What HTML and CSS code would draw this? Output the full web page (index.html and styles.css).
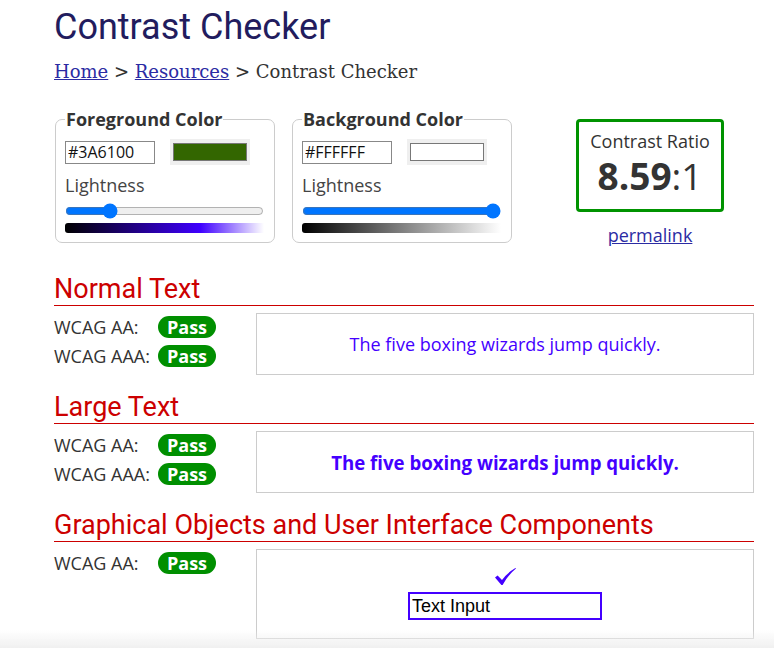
FILE: index.html
```html
<!DOCTYPE html>
<html lang="en">
<head>
    <meta charset="UTF-8">
    <meta name="viewport" content="width=device-width, initial-scale=1.0">
    <title>Contrast Checker</title>
    <link rel="stylesheet" href="styles.css">
</head>
<body>

<div class="page">
    <h1 class="title">Contrast Checker</h1>
    <div class="crumbs">
        <a href="#">Home</a> &gt; <a href="#">Resources</a> &gt; Contrast Checker
    </div>

    <div class="controls">
        <fieldset class="picker">
            <legend>Foreground Color</legend>
            <div class="picker-row">
                <input class="hex" type="text" value="#3A6100">
                <input class="swatch" type="color" value="#336600">
            </div>
            <label class="light-label">Lightness</label>
            <input class="slider" type="range" min="0" max="100" value="20">
            <div class="bar bar-fg"></div>
        </fieldset>

        <fieldset class="picker">
            <legend>Background Color</legend>
            <div class="picker-row">
                <input class="hex" type="text" value="#FFFFFF">
                <input class="swatch" type="color" value="#ffffff">
            </div>
            <label class="light-label">Lightness</label>
            <input class="slider" type="range" min="0" max="100" value="100">
            <div class="bar bar-bg"></div>
        </fieldset>

        <div class="ratio-wrap">
            <div class="ratio">
                <div class="ratio-label">Contrast Ratio</div>
                <div class="ratio-value"><b>8.59</b>:1</div>
            </div>
            <a class="permalink" href="#">permalink</a>
        </div>
    </div>

    <h2 class="section-title">Normal Text</h2>
    <div class="result">
        <div class="grades">
            <div class="grade"><span class="grade-name">WCAG AA:</span><span class="pass">Pass</span></div>
            <div class="grade"><span class="grade-name">WCAG AAA:</span><span class="pass">Pass</span></div>
        </div>
        <div class="sample">The five boxing wizards jump quickly.</div>
    </div>

    <h2 class="section-title">Large Text</h2>
    <div class="result">
        <div class="grades">
            <div class="grade"><span class="grade-name">WCAG AA:</span><span class="pass">Pass</span></div>
            <div class="grade"><span class="grade-name">WCAG AAA:</span><span class="pass">Pass</span></div>
        </div>
        <div class="sample sample-large">The five boxing wizards jump quickly.</div>
    </div>

    <h2 class="section-title">Graphical Objects and User Interface Components</h2>
    <div class="result">
        <div class="grades">
            <div class="grade"><span class="grade-name">WCAG AA:</span><span class="pass">Pass</span></div>
        </div>
        <div class="sample sample-ui">
            <svg class="check" width="21" height="17" viewBox="0 0 21 17">
                <path d="M0 9.5 L2.6 7.6 L7 12 Q12 5 20.4 0 L21 0.6 Q13 7 7.6 17 L6.4 17 Z" fill="#4400ff"/>
            </svg>
            <input class="demo-input" type="text" value="Text Input">
        </div>
    </div>
</div>

<div class="fade"></div>

</body>
</html>
```

FILE: styles.css
```css
body {
    font-family: "Open Sans", sans-serif;
    font-size: 18px;
    margin: 0;
    padding: 0;
    color: #333;
    background: #fff;
}
.page {
    padding: 0 20px 20px 54px;
}
.title {
    font-family: Roboto, sans-serif;
    font-weight: 400;
    font-size: 36px;
    color: #221c5e;
    margin: 0;
    padding-top: 6px;
    line-height: 42px;
}
.crumbs {
    font-family: "DejaVu Serif", serif;
    font-size: 18px;
    margin-top: 13px;
    color: #333;
}
.crumbs a {
    color: #2b2ba3;
}
.controls {
    display: flex;
    align-items: flex-start;
    margin-top: 25px;
    margin-bottom: 26px;
}
.picker {
    width: 199px;
    margin: 0 16px 0 1px;
    padding: 0 10px 9px 9px;
    border: 1px solid #ccc;
    border-radius: 7px;
}
.picker legend {
    font-weight: 700;
    font-size: 18px;
    padding: 0 1px;
    color: #333;
}
.picker-row {
    display: flex;
    align-items: center;
    gap: 15px;
    margin-top: 8px;
}
.hex {
    width: 84px;
    height: 21px;
    padding: 0 2px;
    border: 1px solid #888;
    font-family: "Open Sans", sans-serif;
    font-size: 16px;
    color: #111;
    margin: 0;
}
.swatch {
    width: 80px;
    height: 26px;
    padding: 0;
    margin: 0;
    border: none;
    background: #efefef;
}
.swatch::-webkit-color-swatch-wrapper {
    padding: 4px 3px;
}
.swatch::-webkit-color-swatch {
    border: 1px solid #777;
    border-radius: 0;
}
.light-label {
    display: block;
    margin-top: 8px;
    color: #444;
}
.slider {
    display: block;
    width: 199px;
    margin: 6px 0 0;
}
.bar {
    height: 10px;
    margin-top: 4px;
    border-radius: 3px 0 0 3px;
}
.bar-fg {
    background: linear-gradient(to right, #000, #3f00ff 68%, #fff);
}
.bar-bg {
    background: linear-gradient(to right, #000, #fff);
}
.ratio-wrap {
    margin: 12px 0 0 48px;
    display: flex;
    flex-direction: column;
    align-items: center;
}
.ratio {
    width: 142px;
    height: 87px;
    border: 3px solid #009300;
    border-radius: 4px;
    text-align: center;
}
.ratio-label {
    margin-top: 7px;
    color: #333;
}
.ratio-value {
    font-size: 37px;
    line-height: 40px;
    margin-top: 3px;
    color: #333;
}
.permalink {
    color: #2b2ba3;
    margin-top: 11px;
}
.section-title {
    font-family: Roboto, sans-serif;
    font-weight: 400;
    font-size: 27px;
    color: #cc0000;
    margin: 16px 0 0;
    line-height: 32px;
    border-bottom: 1px solid #cc0000;
}
.result {
    display: flex;
    margin-top: 7px;
}
.grades {
    width: 202px;
    margin-top: -1px;
}
.grade {
    display: flex;
    align-items: center;
    height: 29px;
}
.grade-name {
    width: 104px;
    color: #333;
}
.pass {
    background: #008f00;
    color: #fff;
    font-weight: 700;
    line-height: 22px;
    border-radius: 11px;
    padding: 0 9px;
}
.sample {
    flex: 1;
    border: 1px solid #ccc;
    height: 60px;
    display: flex;
    align-items: center;
    justify-content: center;
    color: #4400ff;
}
.sample-large {
    font-weight: 700;
    font-size: 18.66px;
}
.sample-ui {
    height: 88px;
    flex-direction: column;
}
.check {
    display: block;
    margin-bottom: 7px;
}
.demo-input {
    width: 186px;
    height: 24px;
    margin: 0;
    padding: 0 2px;
    border: 2px solid #4400ff;
    font-family: "Liberation Sans", Arial, sans-serif;
    font-size: 18px;
    color: #000;
}
.fade {
    position: fixed;
    left: 0;
    right: 0;
    bottom: 0;
    height: 18px;
    background: linear-gradient(to bottom, rgba(240, 240, 240, 0), rgba(240, 240, 240, 1));
    pointer-events: none;
}
```
